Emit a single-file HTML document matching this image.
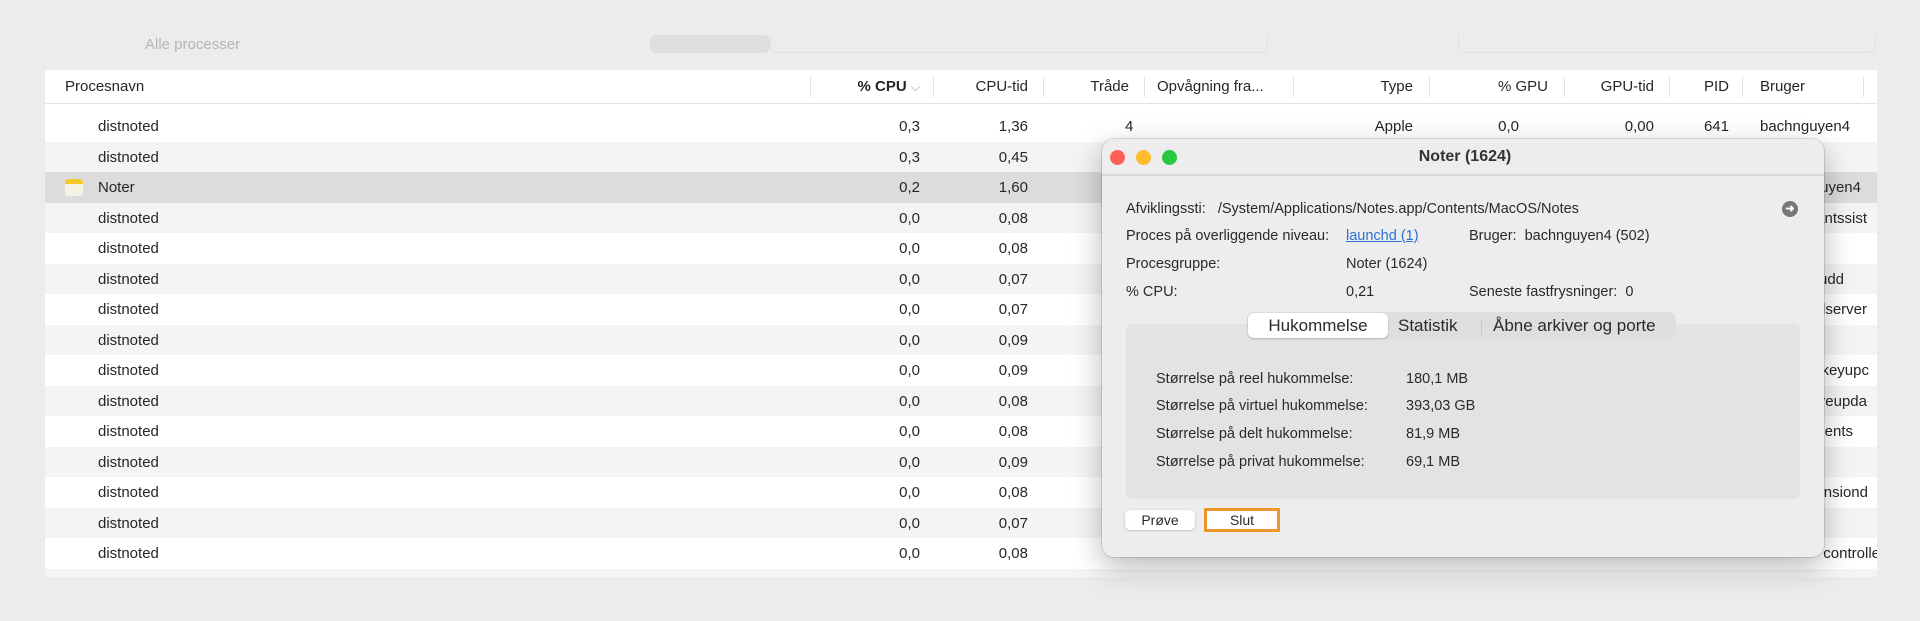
<!DOCTYPE html>
<html><head><meta charset="utf-8">
<style>
*{margin:0;padding:0;box-sizing:border-box}
body{width:1920px;height:621px;background:#ececec;font-family:"Liberation Sans",sans-serif;color:#262626;position:relative;overflow:hidden}
.a{position:absolute;white-space:nowrap}
.tbl{position:absolute;left:45px;top:70px;width:1832px;height:507px;background:#fff;overflow:hidden}
.hdr{position:absolute;left:0;top:0;width:100%;height:34px;border-bottom:1px solid #e2e2e2;font-size:15px}
.sep{position:absolute;top:7px;width:1px;height:20px;background:#e0e0e0}
.row{position:absolute;left:0;width:100%;height:30.5px;font-size:15px}
.row span{position:absolute;top:7px}
.dlg{position:absolute;left:1102px;top:139px;width:722px;height:418px;background:#ededed;border-radius:12px;box-shadow:0 10px 30px rgba(0,0,0,.28),0 0 0 1px rgba(0,0,0,.12);font-size:14.5px;color:#2a2a2a}
.dot{position:absolute;top:11px;width:15px;height:15px;border-radius:50%}
</style></head><body>
<div class="a" style="left:145px;top:36px;font-size:15px;color:#b5b5b5">Alle processer</div>
<div class="a" style="left:650px;top:35px;width:120px;height:18px;background:#dedede;border-radius:6px"></div>
<div class="a" style="left:770px;top:35px;width:498px;height:18px;border:1px solid #e0e0e0;border-top:none;border-radius:0 0 6px 6px"></div>
<div class="a" style="left:1458px;top:35px;width:418px;height:18px;border:1px solid #e0e0e0;border-top:none;border-radius:0 0 8px 8px"></div>

<div class="tbl">
 <div class="hdr">
  <span class="a" style="left:20px;top:8px">Procesnavn</span>
  <div class="sep" style="left:765px"></div>
  <span class="a" style="right:957px;top:8px;font-weight:bold">% CPU <span style="font-weight:normal;color:#999;font-size:12px">⌵</span></span>
  <div class="sep" style="left:888px"></div>
  <span class="a" style="right:849px;top:8px">CPU-tid</span>
  <div class="sep" style="left:998px"></div>
  <span class="a" style="right:748px;top:8px">Tråde</span>
  <div class="sep" style="left:1099px"></div>
  <span class="a" style="left:1112px;top:8px">Opvågning fra...</span>
  <div class="sep" style="left:1248px"></div>
  <span class="a" style="right:464px;top:8px">Type</span>
  <div class="sep" style="left:1384px"></div>
  <span class="a" style="right:329px;top:8px">% GPU</span>
  <div class="sep" style="left:1519px"></div>
  <span class="a" style="right:223px;top:8px">GPU-tid</span>
  <div class="sep" style="left:1624px"></div>
  <span class="a" style="right:148px;top:8px">PID</span>
  <div class="sep" style="left:1697px"></div>
  <span class="a" style="left:1715px;top:8px">Bruger</span>
  <div class="sep" style="left:1818px"></div>
 </div>
 <div class="row" style="top:41px;background:#fff"><span style="left:53px">distnoted</span><span style="right:957px">0,3</span><span style="right:849px">1,36</span><span style="left:1080px">4</span><span style="right:464px">Apple</span><span style="right:358px">0,0</span><span style="right:223px">0,00</span><span style="right:148px">641</span><span style="left:1715px">bachnguyen4</span></div>
 <div class="row" style="top:71.5px;background:#f4f4f4"><span style="left:53px">distnoted</span><span style="right:957px">0,3</span><span style="right:849px">0,45</span></div>
 <div class="row" style="top:102px;background:#dcdcdc"><span style="left:20px;top:7px;width:18px;height:17px;background:#f7f3e4;border-radius:3px;border-top:5px solid #f5c92c"></span><span style="left:53px">Noter</span><span style="right:957px">0,2</span><span style="right:849px">1,60</span><span style="right:16px">bachnguyen4</span></div>
 <div class="row" style="top:132.5px;background:#f4f4f4"><span style="left:53px">distnoted</span><span style="right:957px">0,0</span><span style="right:849px">0,08</span><span style="right:10px">assistantssist</span></div>
 <div class="row" style="top:163px;background:#fff"><span style="left:53px">distnoted</span><span style="right:957px">0,0</span><span style="right:849px">0,08</span></div>
 <div class="row" style="top:193.5px;background:#f4f4f4"><span style="left:53px">distnoted</span><span style="right:957px">0,0</span><span style="right:849px">0,07</span><span style="right:33px">cloudd</span></div>
 <div class="row" style="top:224px;background:#fff"><span style="left:53px">distnoted</span><span style="right:957px">0,0</span><span style="right:849px">0,07</span><span style="right:10px">pboardserver</span></div>
 <div class="row" style="top:254.5px;background:#f4f4f4"><span style="left:53px">distnoted</span><span style="right:957px">0,0</span><span style="right:849px">0,09</span></div>
 <div class="row" style="top:285px;background:#fff"><span style="left:53px">distnoted</span><span style="right:957px">0,0</span><span style="right:849px">0,09</span><span style="right:8px">ssskeyupc</span></div>
 <div class="row" style="top:315.5px;background:#f4f4f4"><span style="left:53px">distnoted</span><span style="right:957px">0,0</span><span style="right:849px">0,08</span><span style="right:10px">softwareupda</span></div>
 <div class="row" style="top:346px;background:#fff"><span style="left:53px">distnoted</span><span style="right:957px">0,0</span><span style="right:849px">0,08</span><span style="right:24px">agents</span></div>
 <div class="row" style="top:376.5px;background:#f4f4f4"><span style="left:53px">distnoted</span><span style="right:957px">0,0</span><span style="right:849px">0,09</span></div>
 <div class="row" style="top:407px;background:#fff"><span style="left:53px">distnoted</span><span style="right:957px">0,0</span><span style="right:849px">0,08</span><span style="right:9px">extensiond</span></div>
 <div class="row" style="top:437.5px;background:#f4f4f4"><span style="left:53px">distnoted</span><span style="right:957px">0,0</span><span style="right:849px">0,07</span></div>
 <div class="row" style="top:468px;background:#fff"><span style="left:53px">distnoted</span><span style="right:957px">0,0</span><span style="right:849px">0,08</span><span style="right:-3px">controlle</span></div>
 <div class="row" style="top:498.5px;background:#f4f4f4"><span style="left:53px">distnoted</span></div>
</div>

<div class="dlg">
 <div class="dot" style="left:8px;background:#fe5f57"></div>
 <div class="dot" style="left:34px;background:#febc2e"></div>
 <div class="dot" style="left:60px;background:#28c840"></div>
 <div class="a" style="left:0;width:722px;text-align:center;padding-left:4px;top:9px;font-size:16px;font-weight:bold;color:#333">Noter (1624)</div>
 <div class="a" style="left:0;top:35px;width:722px;height:2px;background:#d8d8d8"></div>
 <div class="a" style="left:24px;top:62px">Afviklingssti:&nbsp;&nbsp; /System/Applications/Notes.app/Contents/MacOS/Notes</div>
 <div class="a" style="left:680px;top:62px;width:16px;height:16px;border-radius:50%;background:#777;color:#fff;font-size:11px;line-height:16px;text-align:center;font-weight:bold">➜</div>
 <div class="a" style="left:24px;top:89px">Proces på overliggende niveau:</div>
 <div class="a" style="left:244px;top:89px;color:#2d6fd6;text-decoration:underline">launchd (1)</div>
 <div class="a" style="left:367px;top:89px">Bruger:&nbsp; bachnguyen4 (502)</div>
 <div class="a" style="left:24px;top:117px">Procesgruppe:</div>
 <div class="a" style="left:244px;top:117px">Noter (1624)</div>
 <div class="a" style="left:24px;top:145px">% CPU:</div>
 <div class="a" style="left:244px;top:145px">0,21</div>
 <div class="a" style="left:367px;top:145px">Seneste fastfrysninger:&nbsp; 0</div>
 <div class="a" style="left:24px;top:185px;width:674px;height:175px;background:#e3e3e3;border-radius:6px"></div>
 <div class="a" style="left:145px;top:173px;width:429px;height:27px;background:#dedede;border-radius:7px"></div>
 <div class="a" style="left:146px;top:174px;width:140px;height:25px;background:#fff;border-radius:6px;box-shadow:0 1px 2px rgba(0,0,0,.2)"></div>
 <div class="a" style="left:146px;top:177px;width:140px;text-align:center;font-size:17px">Hukommelse</div>
 <div class="a" style="left:296px;top:177px;font-size:17px">Statistik</div>
 <div class="a" style="left:379px;top:180px;width:1px;height:16px;background:#c8c8c8"></div>
 <div class="a" style="left:391px;top:177px;font-size:17px">Åbne arkiver og porte</div>
 <div class="a" style="left:54px;top:232px">Størrelse på reel hukommelse:</div>
 <div class="a" style="left:304px;top:232px">180,1 MB</div>
 <div class="a" style="left:54px;top:259px">Størrelse på virtuel hukommelse:</div>
 <div class="a" style="left:304px;top:259px">393,03 GB</div>
 <div class="a" style="left:54px;top:287px">Størrelse på delt hukommelse:</div>
 <div class="a" style="left:304px;top:287px">81,9 MB</div>
 <div class="a" style="left:54px;top:315px">Størrelse på privat hukommelse:</div>
 <div class="a" style="left:304px;top:315px">69,1 MB</div>
 <div class="a" style="left:23px;top:371px;width:70px;height:20px;background:#fff;border-radius:5px;box-shadow:0 0.5px 2px rgba(0,0,0,.25);text-align:center;font-size:14px;line-height:20px">Prøve</div>
 <div class="a" style="left:102px;top:369px;width:76px;height:24px;background:#fff;border:3px solid #f0952c;text-align:center;font-size:14px;line-height:18px">Slut</div>
</div>
</body></html>
